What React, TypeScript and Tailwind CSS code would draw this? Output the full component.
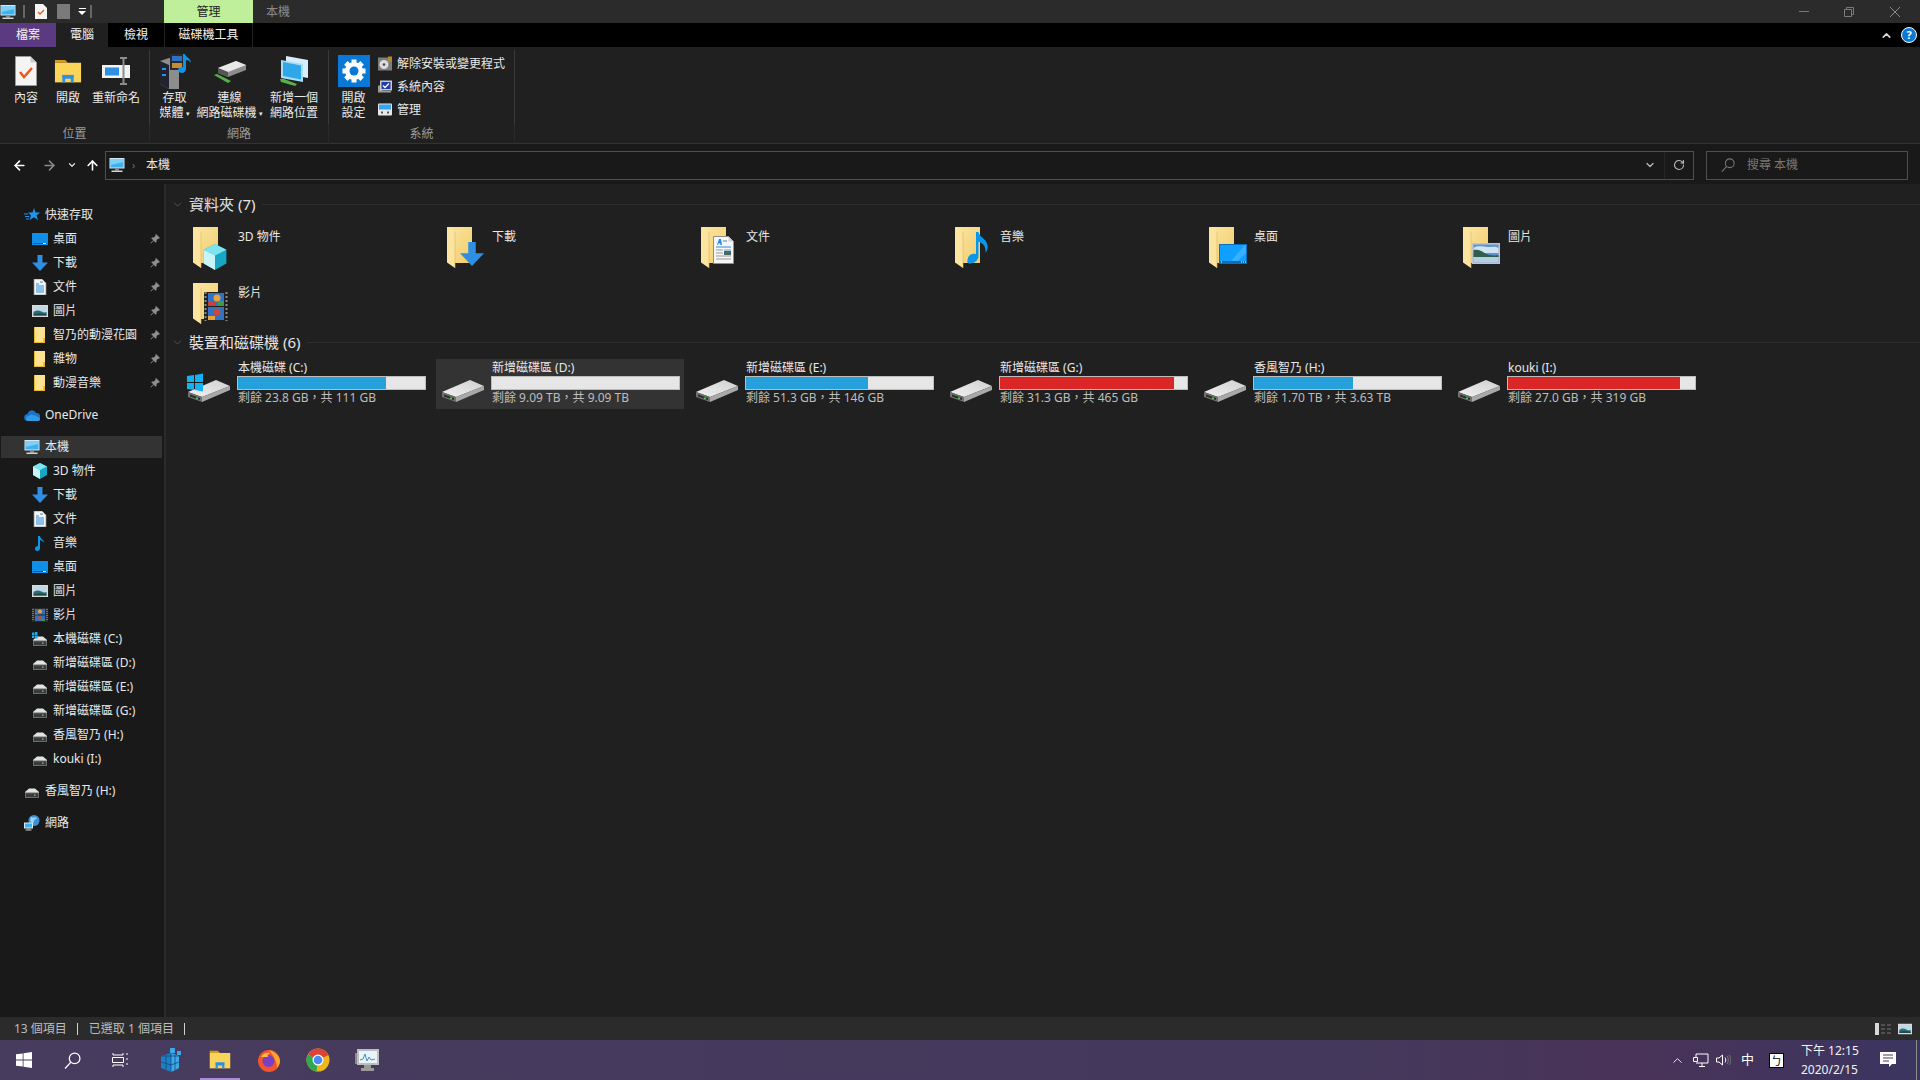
import React from "react";
import { ArrowLeft, ArrowRight, ArrowUp, ChevronDown, ChevronUp, RotateCw } from "lucide-react";

type IconProps = { s?: number };

const PcIcon = ({ s = 16 }: IconProps) => (
  <svg width={s} height={s} viewBox="0 0 16 16">
    <rect x="0.5" y="1" width="15" height="10.5" fill="#cfe9f8" />
    <rect x="1.5" y="2" width="13" height="8.5" fill="#3fb1ef" />
    <path d="M1.5 2h13v3L1.5 8z" fill="#7fd0f7" />
    <rect x="6" y="11.5" width="4" height="2" fill="#8a8a8a" />
    <rect x="2.5" y="13.5" width="11" height="1.5" fill="#d5d5d5" />
  </svg>
);
const DesktopIcon = ({ s = 16 }: IconProps) => (
  <svg width={s} height={s} viewBox="0 0 16 16">
    <rect x="0" y="2" width="16" height="12" rx="0.5" fill="#0f8fe8" />
    <rect x="1" y="12" width="14" height="1" fill="#065ea8" />
    <rect x="11" y="12" width="3" height="1" fill="#bfe4ff" />
  </svg>
);
const DownIcon = ({ s = 16 }: IconProps) => (
  <svg width={s} height={s} viewBox="0 0 16 16">
    <path d="M5.5 0h5v7.5H16L8 16 0 7.5h5.5z" fill="#2f8fe3" />
  </svg>
);
const DocIcon = ({ s = 16 }: IconProps) => (
  <svg width={s} height={s} viewBox="0 0 16 16">
    <path d="M2 0h8l4 4v12H2z" fill="#f4f4f4" stroke="#8c8c8c" strokeWidth="0.7" />
    <path d="M4 5h3M8 3h3M4 7h8M4 9h8M4 11h8M4 13h8" stroke="#2c8be0" strokeWidth="1" />
  </svg>
);
const PicIcon = ({ s = 16 }: IconProps) => (
  <svg width={s} height={s} viewBox="0 0 16 16">
    <rect x="0" y="2" width="16" height="12" fill="#d8d8d8" />
    <rect x="1.5" y="3.5" width="13" height="9" fill="#bcd9ec" />
    <path d="M1.5 9c3-2 5-2 8-.5s3 1 5 .5v3.5h-13z" fill="#2f6f73" />
    <path d="M1.5 11c4-1 8-1 13 0v1.5h-13z" fill="#1d4a4d" />
  </svg>
);
const MiniFolder = ({ s = 16 }: IconProps) => (
  <svg width={s} height={s} viewBox="0 0 16 16">
    <path d="M2 0h11v16H2z" fill="#fde28f" />
    <path d="M2 0h1v16H2zM2 15h11v1H2zM11 11h2v5h-2z" fill="#eab932" />
  </svg>
);
const NoteIcon = ({ s = 16 }: IconProps) => (
  <svg width={s} height={s} viewBox="0 0 16 16">
    <path d="M6 1h2c0 3 4 3.5 4 7-1-2-2.500-2.500-4-3v8.500c0 1.500-1.500 2.500-3 2.500S3 15 3 13.500 4.500 11 6 11z" fill="#0f95e8" />
  </svg>
);
const CubeIcon = ({ s = 16 }: IconProps) => (
  <svg width={s} height={s} viewBox="0 0 16 16">
    <path d="M8 0l7 3.500v8.500L8 16l-7-4V3.500z" fill="#17a6c4" />
    <path d="M1 3.500L8 0l7 3.500L8 7z" fill="#7fe3ee" />
    <path d="M1 3.500L8 7v9l-7-4z" fill="#c8f3f7" />
  </svg>
);
const FilmIcon = ({ s = 16 }: IconProps) => (
  <svg width={s} height={s} viewBox="0 0 16 16">
    <rect x="0" y="1" width="16" height="14" fill="#2b2b2b" />
    <path d="M1 2v12M15 2v12" stroke="#9a9a9a" strokeWidth="1.300" strokeDasharray="1 1" />
    <rect x="3" y="2" width="10" height="5.500" fill="#2f6fc4" />
    <rect x="3" y="8.500" width="10" height="5.500" fill="#2f6fc4" />
    <circle cx="8" cy="4.500" r="2" fill="#e8a33a" />
    <circle cx="8" cy="11" r="2" fill="#c44a3a" />
    <rect x="3" y="6" width="3" height="1.500" fill="#3f9a4a" />
    <rect x="10" y="12.500" width="3" height="1.500" fill="#3f9a4a" />
  </svg>
);
const DriveIcon = ({ s = 16 }: IconProps) => (
  <svg width={s} height={s} viewBox="0 0 16 16">
    <path d="M1 9l4-3.500h6L15 9v5H1z" fill="#e3e3e3" />
    <path d="M1 9.500h14V15H1z" fill="#6a6a6a" />
    <rect x="2" y="10.500" width="12" height="3.500" fill="#3a3a3a" />
    <rect x="10" y="11.500" width="1.500" height="1.500" fill="#3ed05c" />
  </svg>
);
const WinDriveIcon = ({ s = 16 }: IconProps) => (
  <svg width={s} height={s} viewBox="0 0 16 16">
    <path d="M1 9l4-3.500h6L15 9v5H1z" fill="#e3e3e3" />
    <path d="M1 9.500h14V15H1z" fill="#6a6a6a" />
    <rect x="2" y="10.500" width="12" height="3.500" fill="#3a3a3a" />
    <rect x="10" y="11.500" width="1.500" height="1.500" fill="#3ed05c" />
    <path d="M0 1.500h2.500V4H0zM3 1h2.500v3H3zM0 4.500h2.500V7H0zM3 4.500h2.500V7.500H3z" fill="#1fa8ef" />
  </svg>
);
const CloudIcon = ({ s = 16 }: IconProps) => (
  <svg width={s} height={s} viewBox="0 0 16 16">
    <path d="M4 14a3.500 3.500 0 0 1-.5-7A4.500 4.500 0 0 1 12 6a3.500 3.500 0 0 1 1 7.500z" fill="#1a73c8" />
    <path d="M4 14a2.500 2.500 0 0 1 1-5 3 3 0 0 1 5-.5 3 3 0 0 1 3.500 1.500 2 2 0 0 1 1 4z" fill="#2f9ae8" />
  </svg>
);
const StarIcon = ({ s = 16 }: IconProps) => (
  <svg width={s} height={s} viewBox="0 0 16 16">
    <path d="M10 1l1.500 4.500H16l-3.500 3L14 13l-4-2.800L5.500 13 7 8.500 4 5.500h4.500z" fill="#1f96ec" />
    <path d="M0 7h4M1 9.500h4M2 12h3" stroke="#1f96ec" strokeWidth="1" />
  </svg>
);
const NetIcon = ({ s = 16 }: IconProps) => (
  <svg width={s} height={s} viewBox="0 0 16 16">
    <circle cx="10" cy="5.500" r="5.500" fill="#3c8fd8" />
    <path d="M7 2c2 1 4 0 6 1-1 2-3 1-3 3s-2 2-3 1-1-3 0-5z" fill="#9ad4f5" />
    <rect x="0" y="7.500" width="9" height="6" fill="#d8eefa" />
    <rect x="1" y="8.500" width="7" height="4" fill="#3fb1ef" />
    <rect x="3" y="13.500" width="3" height="1" fill="#999999" />
    <rect x="1.500" y="14.500" width="6" height="1" fill="#d0d0d0" />
  </svg>
);
const PinIcon = () => (
  <svg width="10" height="10" viewBox="0 0 10 10">
    <path d="M6 0l4 4-1 .7-.7-.3L6.500 6.200l.1 1.800-.8.800L3.700 6.700 1 9.500l-.5-.5L3.300 6.300 1.200 4.200 2 3.400l1.800.1L5.600 1.700l-.3-.7z" fill="#8f8f8f" />
  </svg>
);
const Glass = ({ s = 16, color }: { s?: number; color: string }) => (
  <svg width={s} height={s} viewBox="0 0 16 16" fill="none" stroke={color} strokeWidth="1.200">
    <circle cx="10" cy="6" r="5" />
    <path d="M6.500 9.500L1 15.500" />
  </svg>
);

// overlays that sit on the big folders
const BigDoc = () => (
  <svg width="21" height="28" viewBox="0 0 21 28">
    <path d="M.5.500h15l5 5v22H.5z" fill="#f6f6f6" stroke="#8f8f8f" />
    <path d="M15.500.500v5h5z" fill="#d0d0d0" />
    <path d="M4 9l2-6h2l1 6H7.500l-.3-1.500H5.500L5 9z" fill="#2c8be0" />
    <path d="M10 5h4M3 11h15" stroke="#2c8be0" />
    <path d="M3 14h7M3 17h7M3 20h15M3 23h15" stroke="#9a9a9a" />
    <rect x="11" y="13" width="7" height="6" fill="#49676b" />
    <rect x="11" y="13" width="7" height="2" fill="#a9c9dc" />
  </svg>
);
const BigNote = () => (
  <svg width="22" height="32" viewBox="0 0 22 32">
    <path d="M9 0h2.500c.5 4 5 5.500 7.500 9.500s2 8-.5 11.500c.5-4-.5-9-7-11.500V24c0 4-4 7.500-8 7.500S0 29 1 26c1-3.500 4.500-5 8-4z" fill="#0a97ea" />
  </svg>
);
const BigDesktop = () => (
  <svg width="28" height="20" viewBox="0 0 28 20">
    <rect width="28" height="20" fill="#0b6fbd" />
    <rect x="1" y="1" width="26" height="16" fill="#10a0ff" />
    <path d="M12 17L26 1h1v8l-8 8z" fill="#36b1ff" />
    <path d="M2 18h1M22 18h1M24 18h1M26 18h1" stroke="#ffffff" />
  </svg>
);
const BigPic = () => (
  <svg width="28" height="21" viewBox="0 0 28 21">
    <rect width="28" height="21" fill="#c4c4c4" />
    <rect x="1.500" y="1.500" width="25" height="18" fill="#5f94d4" />
    <path d="M1.500 5c5-3 10-1 14-1s8-1 11 1v5h-25z" fill="#cfe3f2" />
    <path d="M1.500 7c5-1 8 1 11 3s9 3 14 2v2h-25z" fill="#2f5f4a" />
    <rect x="1.500" y="14" width="25" height="5.500" fill="#b5cfe0" />
  </svg>
);
const BigFilm = () => (
  <svg width="24" height="29" viewBox="0 0 24 29">
    <rect width="24" height="29" fill="#202020" />
    <path d="M1.500 0v29M22.500 0v29" stroke="#8a8a8a" strokeWidth="2" strokeDasharray="2 2" />
    <rect x="4" y="1" width="16" height="13" fill="#2f72c8" />
    <rect x="4" y="15" width="16" height="13" fill="#2f72c8" />
    <circle cx="13" cy="6" r="3.500" fill="#e8a33a" />
    <circle cx="13" cy="20" r="3.500" fill="#c44a3a" />
    <rect x="4" y="10" width="7" height="4" fill="#c4423a" />
    <rect x="14" y="9" width="6" height="5" fill="#3f9a4a" />
    <rect x="4" y="24" width="7" height="4" fill="#e8a33a" />
  </svg>
);

const BigFolder = ({ overlay, pos }: { overlay: React.ReactNode; pos: string }) => (
  <div className="relative h-[44px] w-[46px] shrink-0">
    <svg width="26" height="42" viewBox="0 0 26 42">
      <defs>
        <linearGradient id="folderBack" x1="0" y1="0" x2="1" y2="1">
          <stop offset="0" stopColor="#fbe6a4" />
          <stop offset="1" stopColor="#f2cc6a" />
        </linearGradient>
      </defs>
      <path d="M1 0h25v36H9z" fill="url(#folderBack)" />
      <path d="M1 0l8 4.500V41l-8-5.500z" fill="#fbe3a0" />
      <path d="M9 4.500V41" stroke="#e3b653" strokeWidth="0.6" />
    </svg>
    <div className={`absolute flex ${pos}`}>{overlay}</div>
  </div>
);

const BigDrive = ({ win }: { win?: boolean }) => (
  <svg width="44" height="36" viewBox="0 0 44 36">
    <defs>
      <linearGradient id="driveTop" x1="0" y1="1" x2="1" y2="0">
        <stop offset="0" stopColor="#f2f2f2" />
        <stop offset="1" stopColor="#cfcfcf" />
      </linearGradient>
    </defs>
    <path d="M1 23L29 11l14 6-28 11z" fill="url(#driveTop)" />
    <path d="M15 28l28-11v4L15 33z" fill="#a8a8a8" />
    <path d="M1 23l14 5v5L1 28z" fill="#707070" />
    <path d="M3 25.500l10 3.500v2L3 27.500z" fill="#2c2c2c" />
    <rect x="9" y="28.500" width="2" height="1.500" fill="#3ed05c" />
    {win && <path d="M0 7l7-1v7H0zM8 6l8-1.500V13H8zM0 14h7v7l-7-1zM8 14h8v8.500L8 21z" fill="#14b1f5" />}
  </svg>
);

const sidebarTop = [
  { label: "桌面", icon: <DesktopIcon /> },
  { label: "下載", icon: <DownIcon /> },
  { label: "文件", icon: <DocIcon /> },
  { label: "圖片", icon: <PicIcon /> },
  { label: "智乃的動漫花園", icon: <MiniFolder /> },
  { label: "雜物", icon: <MiniFolder /> },
  { label: "動漫音樂", icon: <MiniFolder /> },
];

const sidebarPc = [
  { label: "3D 物件", icon: <CubeIcon /> },
  { label: "下載", icon: <DownIcon /> },
  { label: "文件", icon: <DocIcon /> },
  { label: "音樂", icon: <NoteIcon /> },
  { label: "桌面", icon: <DesktopIcon /> },
  { label: "圖片", icon: <PicIcon /> },
  { label: "影片", icon: <FilmIcon /> },
  { label: "本機磁碟 (C:)", icon: <WinDriveIcon /> },
  { label: "新增磁碟區 (D:)", icon: <DriveIcon /> },
  { label: "新增磁碟區 (E:)", icon: <DriveIcon /> },
  { label: "新增磁碟區 (G:)", icon: <DriveIcon /> },
  { label: "香風智乃 (H:)", icon: <DriveIcon /> },
  { label: "kouki (I:)", icon: <DriveIcon /> },
];

const folders = [
  { label: "3D 物件", overlay: <CubeIcon s={26} />, pos: "left-[10px] top-[17px]" },
  { label: "下載", overlay: <DownIcon s={24} />, pos: "left-[14px] top-[15px]" },
  { label: "文件", overlay: <BigDoc />, pos: "left-[13px] top-[9px]" },
  { label: "音樂", overlay: <BigNote />, pos: "left-[13px] top-[5px]" },
  { label: "桌面", overlay: <BigDesktop />, pos: "left-[11px] top-[17px]" },
  { label: "圖片", overlay: <BigPic />, pos: "left-[10px] top-[16px]" },
  { label: "影片", overlay: <BigFilm />, pos: "left-[12px] top-[9px]" },
];

const drives = [
  { name: "本機磁碟 (C:)", free: "剩餘 23.8 GB，共 111 GB", used: "w-[79%]", bar: "bg-[#26a0da]", win: true },
  { name: "新增磁碟區 (D:)", free: "剩餘 9.09 TB，共 9.09 TB", used: "w-[0%]", bar: "bg-[#26a0da]", selected: true },
  { name: "新增磁碟區 (E:)", free: "剩餘 51.3 GB，共 146 GB", used: "w-[65%]", bar: "bg-[#26a0da]" },
  { name: "新增磁碟區 (G:)", free: "剩餘 31.3 GB，共 465 GB", used: "w-[93%]", bar: "bg-[#da2626]" },
  { name: "香風智乃 (H:)", free: "剩餘 1.70 TB，共 3.63 TB", used: "w-[53%]", bar: "bg-[#26a0da]" },
  { name: "kouki (I:)", free: "剩餘 27.0 GB，共 319 GB", used: "w-[92%]", bar: "bg-[#da2626]" },
];

const NavRow = ({ label, icon, pin, sub, active, className }: { label: string; icon: React.ReactNode; pin?: boolean; sub?: boolean; active?: boolean; className?: string }) => (
  <div className={`flex h-[24px] items-center ${className ?? ""}`}>
    <div className={`ml-px flex h-[22px] w-[161px] items-center ${active ? "bg-[#333333]" : ""} ${sub ? "pl-[31px]" : "pl-[23px]"}`}>
      <span className="flex w-[21px] shrink-0">{icon}</span>
      <span className="whitespace-nowrap text-[#e8e8e8]">{label}</span>
      {pin && (
        <span className="ml-auto mr-[2px] flex">
          <PinIcon />
        </span>
      )}
    </div>
  </div>
);

const SectionHeader = ({ title, className }: { title: string; className?: string }) => (
  <div className={`flex h-[20px] items-center ${className ?? ""}`}>
    <ChevronDown className="ml-[5px] mr-[5px] text-[#6b6b6b]" size={13} strokeWidth={1.2} />
    <span className="whitespace-nowrap text-[15px] text-[#e4e4e4]">{title}</span>
    <div className="ml-[7px] h-px flex-1 bg-[#2e2e2e]" />
  </div>
);

const BigButton = ({ icon, lines, caret, w }: { icon: React.ReactNode; lines: string[]; caret?: boolean; w: string }) => (
  <div className={`flex flex-col items-center ${w}`}>
    <div className="flex h-[38px] items-center justify-center">{icon}</div>
    {lines.map((l, i) => (
      <div key={l} className="h-[15px] whitespace-nowrap leading-[15px] text-[#e8e8e8]">
        {l}
        {caret && i === lines.length - 1 && <span className="ml-[2px] align-middle text-[7px]">▾</span>}
      </div>
    ))}
  </div>
);

const RibbonGroup = ({ label, width, children }: { label: string; width: string; children: React.ReactNode }) => (
  <div className={`flex h-[94px] flex-col ${width}`}>
    <div className="flex flex-1 border-r border-[#3a3a3a] pt-[2px]">{children}</div>
    <div className="h-[20px] border-r border-[#2a2a2a] pt-[2px] text-center leading-[16px] text-[#9a9a9a]">{label}</div>
  </div>
);

const SmallAction = ({ icon, label }: { icon: React.ReactNode; label: string }) => (
  <div className="flex h-[23px] items-center">
    <span className="mr-[5px] flex w-[14px]">{icon}</span>
    <span className="whitespace-nowrap text-[#e8e8e8]">{label}</span>
  </div>
);

const PropsIcon = () => (
  <svg width="22" height="30" viewBox="0 0 22 30">
    <path d="M.5.500h15l6 6v23H.5z" fill="#f4f4f4" stroke="#9a9a9a" />
    <path d="M15.500.500v6h6z" fill="#c8c8c8" />
    <path d="M5 16l4 5 8-9" fill="none" stroke="#ea5a1e" strokeWidth="2.500" />
  </svg>
);
const OpenIcon = ({ s = 28 }: IconProps) => (
  <svg width={s} height={s * 0.87} viewBox="0 0 30 26">
    <path d="M1 1h11l3 3H1z" fill="#d89a22" />
    <path d="M1 4h28v21H1z" fill="#fbd45a" />
    <path d="M9 25v-8h12v8h-3v-4h-6v4z" fill="#2f8fe3" />
    <path d="M9 17h12v3H9z" fill="#2f8fe3" />
  </svg>
);
const RenameIcon = () => (
  <svg width="28" height="30" viewBox="0 0 28 30">
    <rect x="0" y="9" width="28" height="13" fill="#f2f2f2" />
    <rect x="3" y="11.500" width="14" height="8" fill="#2f8fe3" />
    <path d="M18 2h7M18 28h7M21.500 2v26" stroke="#8d8d8d" strokeWidth="2" />
  </svg>
);
const MediaIcon = () => (
  <svg width="32" height="36" viewBox="0 0 32 36">
    <path d="M1 8l9-3 10 2v29H10L1 31z" fill="#8d8d8d" />
    <path d="M1 8l9 4v24l-9-5z" fill="#1f2430" />
    <rect x="11" y="1" width="14" height="16" fill="#2b2b2b" />
    <rect x="13" y="3" width="10" height="5" fill="#2f6fc4" />
    <rect x="13" y="10" width="10" height="5" fill="#c98a34" />
    <rect x="3" y="15" width="4" height="2" fill="#2f8fe3" />
    <rect x="3" y="21" width="4" height="2" fill="#2f8fe3" />
    <path d="M24 1h2c0 3 6 4 6 9-1-2-3-3-5-3v9c0 2-2 4-4 4s-4-1-4-3 2-3 5-3z" fill="#0f95e8" />
  </svg>
);
const MapDriveIcon = () => (
  <svg width="34" height="30" viewBox="0 0 34 30">
    <path d="M5 12L23 5l10 4v5L15 21 5 17z" fill="#8c8c8c" />
    <path d="M5 12L23 5l10 4-18 7z" fill="#e8e8e8" />
    <path d="M5 12l10 4v5L5 17z" fill="#555555" />
    <path d="M1 19l3-1 14 7-3 2z" fill="#58b04a" />
  </svg>
);
const NetPlaceIcon = () => (
  <svg width="30" height="32" viewBox="0 0 30 32">
    <path d="M7 1l22 4v18L7 19z" fill="#d6eefb" />
    <path d="M2 5l22 4v18L2 23z" fill="#a9dcf6" />
    <path d="M4 7l18 3.500v14L4 21z" fill="#2fa8ea" />
    <path d="M1 24l4 0 13 5-2 2-14-4z" fill="#58b04a" />
  </svg>
);
const GearIcon = () => (
  <svg width="32" height="32" viewBox="0 0 32 32">
    <rect width="32" height="32" fill="#0a78d7" />
    <g transform="translate(16 16)" fill="#ffffff">
      <rect x="-2.500" y="-11.500" width="5" height="23" />
      <rect x="-2.500" y="-11.500" width="5" height="23" transform="rotate(45)" />
      <rect x="-2.500" y="-11.500" width="5" height="23" transform="rotate(90)" />
      <rect x="-2.500" y="-11.500" width="5" height="23" transform="rotate(135)" />
      <circle r="9" />
    </g>
    <circle cx="16" cy="16" r="4.500" fill="#0a78d7" />
  </svg>
);
const UninstallIcon = () => (
  <svg width="15" height="15" viewBox="0 0 14 14">
    <rect x="0" y="1" width="14" height="13" fill="#7d7d7d" />
    <rect x="10" y="0" width="4" height="5" fill="#b58a34" />
    <circle cx="6" cy="8" r="4.500" fill="#dcdcdc" />
    <circle cx="6" cy="8" r="1.300" fill="#444444" />
  </svg>
);
const SysPropsIcon = () => (
  <svg width="15" height="15" viewBox="0 0 14 14">
    <rect x="0" y="6" width="4" height="7" fill="#9a9a9a" />
    <rect x="2" y="1" width="12" height="10" fill="#c9c9c9" />
    <rect x="3.500" y="2.500" width="9" height="7" fill="#1f3fae" />
    <path d="M5 6l2 2 4-4" fill="none" stroke="#ffffff" strokeWidth="1.300" />
    <rect x="4" y="11.500" width="9" height="1.500" fill="#9a9a9a" />
  </svg>
);
const ManageIcon = () => (
  <svg width="15" height="15" viewBox="0 0 14 14">
    <rect x="0" y="1" width="14" height="12" rx="1" fill="#e8e8e8" />
    <rect x="1" y="2" width="12" height="5" fill="#37a4ef" />
    <rect x="3" y="9" width="2" height="2" fill="#555555" />
    <rect x="9" y="9" width="2" height="2" fill="#555555" />
  </svg>
);

const TitleBar = () => (
  <div className="flex h-[23px] items-center bg-[#2b2b2b]">
    <span className="flex w-[16px]">
      <PcIcon />
    </span>
    <div className="ml-[7px] h-[13px] w-[2px] border-x border-[#666666]" />
    <span className="ml-[10px] flex">
      <svg width="12" height="15" viewBox="0 0 12 15">
        <path d="M0 0h8l4 4v11H0z" fill="#f4f4f4" />
        <path d="M3 8l2 2 4-4" fill="none" stroke="#ea5a1e" strokeWidth="1.300" />
      </svg>
    </span>
    <div className="ml-[10px] h-[15px] w-[13px] bg-[#7a7a7a]" />
    <span className="ml-[7px] flex w-[10px] flex-col items-center">
      <span className="h-px w-[7px] bg-white" />
      <span className="mt-[2px] h-0 w-0 border-x-[4px] border-t-[4px] border-x-transparent border-t-white" />
    </span>
    <div className="ml-[3px] h-[13px] w-[2px] border-x border-[#666666]" />
    <div className="ml-[72px] flex h-[23px] w-[89px] items-center justify-center bg-[#c0ef9b] text-[#222222]">管理</div>
    <span className="ml-[13px] text-[#8a8a8a]">本機</span>
    <div className="ml-auto flex items-center text-[#7a7a7a]">
      <div className="h-px w-[10px] bg-[#7a7a7a]" />
      <svg className="ml-[35px]" width="10" height="10" viewBox="0 0 10 10" fill="none" stroke="#7a7a7a">
        <path d="M.5 2.500h7v7h-7zM2.500 2.500v-2h7v7h-2" />
      </svg>
      <svg className="ml-[36px] mr-[20px]" width="10" height="10" viewBox="0 0 10 10" fill="none" stroke="#8a8a8a">
        <path d="M0 0l10 10M10 0L0 10" />
      </svg>
    </div>
  </div>
);

const RibbonTabs = () => (
  <div className="flex h-[24px] items-center bg-black">
    <div className="flex h-full w-[56px] items-center justify-center bg-[#5b3a82] text-[#f2f2f2]">檔案</div>
    <div className="flex h-full w-[52px] items-center justify-center bg-[#202020] text-[#f2f2f2]">電腦</div>
    <div className="flex h-full w-[56px] items-center justify-center text-[#f2f2f2]">檢視</div>
    <div className="flex h-full w-[89px] items-center justify-center border-x border-[#222222] text-[#f2f2f2]">磁碟機工具</div>
    <div className="ml-auto flex items-center">
      <ChevronUp className="text-[#d8d8d8]" size={13} strokeWidth={3} />
      <div className="ml-[8px] mr-[3px] flex h-[16px] w-[16px] items-center justify-center rounded-full border border-white bg-[#0a78d7] text-[11px] font-bold text-white">?</div>
    </div>
  </div>
);

const Ribbon = () => (
  <div className="flex h-[97px] items-start border-b border-[#333333] bg-[#202020] pt-[3px]">
    <RibbonGroup label="位置" width="w-[150px]">
      <BigButton w="w-[52px]" icon={<PropsIcon />} lines={["內容"]} />
      <BigButton w="w-[32px]" icon={<OpenIcon />} lines={["開啟"]} />
      <BigButton w="w-[64px]" icon={<RenameIcon />} lines={["重新命名"]} />
    </RibbonGroup>
    <RibbonGroup label="網路" width="w-[179px]">
      <BigButton w="w-[49px]" icon={<MediaIcon />} lines={["存取", "媒體"]} caret />
      <BigButton w="w-[61px]" icon={<MapDriveIcon />} lines={["連線", "網路磁碟機"]} caret />
      <BigButton w="w-[68px]" icon={<NetPlaceIcon />} lines={["新增一個", "網路位置"]} />
    </RibbonGroup>
    <RibbonGroup label="系統" width="w-[186px]">
      <BigButton w="w-[49px]" icon={<GearIcon />} lines={["開啟", "設定"]} />
      <div className="flex flex-col">
        <SmallAction icon={<UninstallIcon />} label="解除安裝或變更程式" />
        <SmallAction icon={<SysPropsIcon />} label="系統內容" />
        <SmallAction icon={<ManageIcon />} label="管理" />
      </div>
    </RibbonGroup>
  </div>
);

const AddressBar = () => (
  <div className="flex h-[40px] items-center bg-[#191919] pt-[2px]">
    <ArrowLeft className="ml-[12px] text-white" size={15} strokeWidth={2.5} />
    <ArrowRight className="ml-[15px] text-[#8a8a8a]" size={15} strokeWidth={2.5} />
    <ChevronDown className="ml-[10px] text-[#d8d8d8]" size={10} strokeWidth={3} />
    <ArrowUp className="ml-[8px] text-white" size={15} strokeWidth={2.5} />
    <div className="ml-[5px] flex h-[29px] w-[1589px] items-center border border-[#4f4f4f]">
      <span className="ml-[3px] flex">
        <PcIcon />
      </span>
      <span className="ml-[7px] text-[10px] text-[#777777]">›</span>
      <span className="ml-[11px] text-[#e8e8e8]">本機</span>
      <ChevronDown className="ml-auto text-[#bdbdbd]" size={12} strokeWidth={2.5} />
      <div className="ml-[8px] flex h-full w-[29px] items-center justify-center border-l border-[#262626]">
        <RotateCw className="text-[#bdbdbd]" size={12} strokeWidth={2.2} />
      </div>
    </div>
    <div className="ml-[12px] flex h-[29px] w-[202px] items-center border border-[#4f4f4f]">
      <span className="ml-[14px] flex">
        <Glass s={14} color="#777777" />
      </span>
      <span className="ml-[12px] text-[#777777]">搜尋 本機</span>
    </div>
  </div>
);

const Sidebar = () => (
  <div className="w-[166px] shrink-0 border-r-2 border-[#2b2b2b] bg-[#191919] pt-[19px]">
    <NavRow label="快速存取" icon={<StarIcon />} />
    {sidebarTop.map((r) => (
      <NavRow key={r.label} label={r.label} icon={r.icon} pin sub />
    ))}
    <NavRow className="mt-[8px]" label="OneDrive" icon={<CloudIcon />} />
    <NavRow className="mt-[8px]" label="本機" icon={<PcIcon />} active />
    {sidebarPc.map((r) => (
      <NavRow key={r.label} label={r.label} icon={r.icon} sub />
    ))}
    <NavRow className="mt-[8px]" label="香風智乃 (H:)" icon={<DriveIcon />} />
    <NavRow className="mt-[8px]" label="網路" icon={<NetIcon />} />
  </div>
);

const Content = () => (
  <div className="flex-1 bg-[#202020] pt-[10px]">
    <SectionHeader title="資料夾 (7)" />
    <div className="ml-[16px] mt-[6px] grid grid-cols-[repeat(6,254px)]">
      {folders.map((f) => (
        <div key={f.label} className="flex h-[56px] pl-[10px] pt-[7px]">
          <BigFolder overlay={f.overlay} pos={f.pos} />
          <span className="mt-[1px] text-[#e8e8e8]">{f.label}</span>
        </div>
      ))}
    </div>
    <SectionHeader title="裝置和磁碟機 (6)" />
    <div className="ml-[16px] mt-[7px] grid grid-cols-[repeat(6,254px)]">
      {drives.map((d) => (
        <div key={d.name} className={`flex h-[50px] w-[248px] pl-[5px] ${d.selected ? "bg-[#333333]" : ""}`}>
          <div className="mt-[10px] w-[50px] shrink-0">
            <BigDrive win={d.win} />
          </div>
          <div className="w-[189px] pt-px">
            <div className="h-[16px] pl-[1px] leading-[16px] text-[#e8e8e8]">{d.name}</div>
            <div className="h-[14px] border border-[#bcbcbc] bg-[#e6e6e6]">
              <div className={`h-full ${d.used} ${d.bar}`} />
            </div>
            <div className="h-[16px] whitespace-nowrap pl-[1px] leading-[16px] text-[#bdbdbd]">{d.free}</div>
          </div>
        </div>
      ))}
    </div>
  </div>
);

const StatusBar = () => (
  <div className="flex h-[23px] items-center bg-[#2b2b2b] text-[#bdbdbd]">
    <span className="ml-[14px]">13 個項目</span>
    <div className="ml-[10px] h-[12px] w-px bg-[#d0d0d0]" />
    <span className="ml-[11px]">已選取 1 個項目</span>
    <div className="ml-[10px] h-[12px] w-px bg-[#d0d0d0]" />
    <div className="ml-auto flex items-center">
      <svg width="18" height="12" viewBox="0 0 18 12">
        <rect x="0" y="0" width="4" height="12" fill="#d8d8d8" />
        <path d="M6 2h4M12 2h4M6 6h4M12 6h4M6 10h4M12 10h4" stroke="#777777" />
      </svg>
      <span className="ml-[5px] mr-[8px] flex">
        <PicIcon s={14} />
      </span>
    </div>
  </div>
);

const FirefoxIcon = () => (
  <svg width="24" height="24" viewBox="0 0 24 24">
    <circle cx="12" cy="13" r="11" fill="#f2542d" />
    <path d="M12 2c6 2 11 6 11 11 0 2-1 5-3 7 0-5-2-10-8-18z" fill="#ffa52e" />
    <circle cx="11.500" cy="13" r="6" fill="#7b3fc4" />
    <path d="M4 9c2-4 6-5 9-4-2 1-3 3-2 4-3 0-5 0-7 0z" fill="#ffbd3a" />
  </svg>
);
const ChromeIcon = () => (
  <svg width="24" height="24" viewBox="0 0 24 24">
    <circle cx="12" cy="12" r="11.500" fill="#eeb71c" />
    <path d="M12 12L2 6.500A11.500 11.500 0 0 1 22.500 7z" fill="#db4437" />
    <path d="M12 12L2 6.500A11.500 11.500 0 0 0 10.500 23.500z" fill="#2da94f" />
    <circle cx="12" cy="12" r="5.500" fill="#ffffff" />
    <circle cx="12" cy="12" r="4.300" fill="#4a8af4" />
  </svg>
);
const ResMonIcon = () => (
  <svg width="24" height="24" viewBox="0 0 24 24">
    <rect x="0" y="5" width="5" height="11" fill="#8a8a8a" />
    <rect x="2" y="1" width="22" height="16" fill="#bdbdbd" />
    <rect x="4" y="3" width="18" height="12" fill="#e8f4f8" />
    <path d="M5 12l3-1 2-5 2 7 2-4 2 3 4-1" fill="none" stroke="#4a8ac4" />
    <path d="M9 17h7v3H9zM6 20h13v3H6z" fill="#9a9a9a" />
  </svg>
);
const RegCubeIcon = () => (
  <svg width="22" height="24" viewBox="0 0 22 24">
    <path d="M1 8l10-3 8 3v12l-8 4-10-4z" fill="#1f7fc4" />
    <path d="M11 5l8 3v12l-8 4z" fill="#3fa8e8" />
    <path d="M1 8h18M1 14l10 3 8-3M6 7v15M11 5v19M15 7v15" stroke="#0c4e80" strokeWidth="0.8" fill="none" />
    <path d="M10 0h5v5h-5zM17 3h4v4h-4z" fill="#3fa8e8" />
  </svg>
);

const Taskbar = () => (
  <div className="flex h-[40px] items-center bg-[linear-gradient(90deg,#473b5e_0%,#44395c_70%,#4a3358_85%,#3a3560_100%)]">
    <svg className="ml-[16px]" width="16" height="16" viewBox="0 0 16 16" fill="#ffffff">
      <path d="M0 2.300l6.700-.9V7.600H0zM7.500 1.300L16 0v7.600H7.500zM0 8.400h6.700v6.200L0 13.700zM7.500 8.400H16V16l-8.500-1.300z" />
    </svg>
    <span className="ml-[32px] flex">
      <Glass s={17} color="#ffffff" />
    </span>
    <svg className="ml-[31px]" width="16" height="16" viewBox="0 0 16 16" fill="none" stroke="#ffffff">
      <path d="M1 1v2h10V1M1 15v-2h10v2M.5 5.500h11v5H.5zM14 2h2M14 7h2M14 12h2" />
    </svg>
    <span className="ml-[32px] flex">
      <RegCubeIcon />
    </span>
    <div className="relative ml-[18px] flex h-full w-[40px] items-center justify-center">
      <OpenIcon s={22} />
      <div className="absolute bottom-0 h-[2px] w-full bg-[#a98bd8]" />
    </div>
    <span className="ml-[17px] flex">
      <FirefoxIcon />
    </span>
    <span className="ml-[25px] flex">
      <ChromeIcon />
    </span>
    <span className="ml-[25px] flex">
      <ResMonIcon />
    </span>
    <div className="ml-auto flex h-full items-center text-[#f2f2f2]">
      <ChevronUp size={15} strokeWidth={1.5} />
      <svg className="ml-[8px]" width="16" height="14" viewBox="0 0 16 14" fill="none" stroke="#ffffff">
        <path d="M3 4V1h12v9H3M9 10v3M6 13.500h6M.5 4.500h4v4h-4z" />
      </svg>
      <svg className="ml-[7px]" width="15" height="12" viewBox="0 0 15 12" fill="none" stroke="#ffffff">
        <path d="M.5 4v4h2.500L6.500 11V1L3 4z" />
        <path d="M9 3.500c1 1.500 1 3.500 0 5" />
        <path d="M11 2c1.800 2 1.800 6 0 8M13 1c2.500 3 2.500 7 0 10" stroke="#7a7a7a" />
      </svg>
      <span className="ml-[10px] text-[13px] text-white">中</span>
      <div className="ml-[15px] flex h-[15px] w-[15px] items-center justify-center border border-black bg-white text-[11px] leading-none text-black">ㄅ</div>
      <div className="ml-[17px] w-[65px] leading-[19px]">
        <div>下午 12:15</div>
        <div>2020/2/15</div>
      </div>
      <svg className="ml-[13px]" width="18" height="18" viewBox="0 0 18 18">
        <path d="M1 1h16v12h-4l-3 3v-3H1z" fill="#ffffff" />
        <path d="M4 4h10M4 7h10M4 10h6" stroke="#4a3a5e" />
      </svg>
      <div className="ml-[19px] h-full w-px bg-[#8a8a8a]" />
      <div className="w-[3px]" />
    </div>
  </div>
);

const App: React.FC = () => {
  return (
    <div className="flex h-[1080px] w-[1920px] flex-col overflow-hidden bg-[#202020] font-['Noto_Sans','Noto_Sans_CJK_TC',sans-serif] text-[12px]">
      <TitleBar />
      <RibbonTabs />
      <Ribbon />
      <AddressBar />
      <div className="flex min-h-0 flex-1">
        <Sidebar />
        <Content />
      </div>
      <StatusBar />
      <Taskbar />
    </div>
  );
};

export default App;
